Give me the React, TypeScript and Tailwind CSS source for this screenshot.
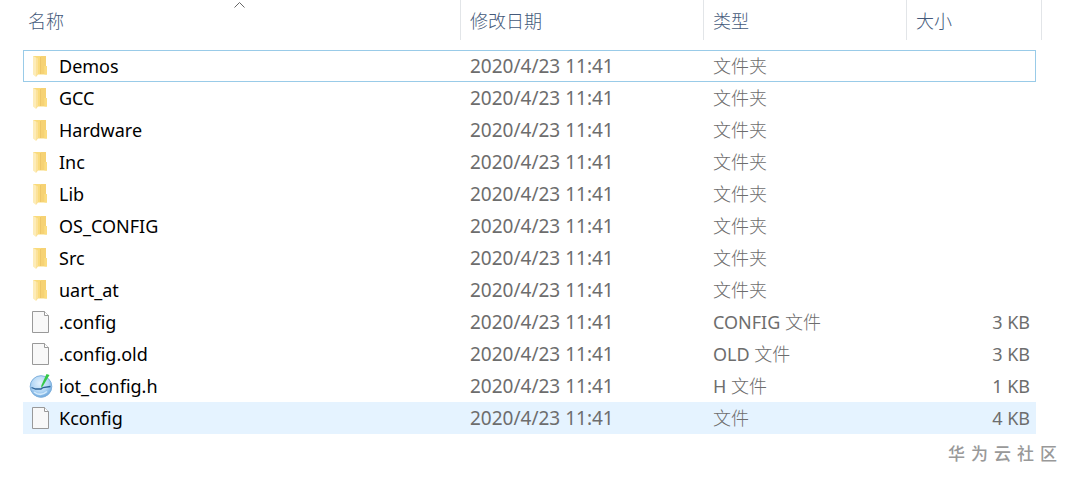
import { useState } from "react";

type FileItem = {
  name: string;
  icon: "folder" | "file" | "header";
  extension?: string;
  type: string;
  size?: string;
};

const MODIFIED = "2020/4/23 11:41";

const files: FileItem[] = [
  { name: "Demos", icon: "folder", type: "文件夹" },
  { name: "GCC", icon: "folder", type: "文件夹" },
  { name: "Hardware", icon: "folder", type: "文件夹" },
  { name: "Inc", icon: "folder", type: "文件夹" },
  { name: "Lib", icon: "folder", type: "文件夹" },
  { name: "OS_CONFIG", icon: "folder", type: "文件夹" },
  { name: "Src", icon: "folder", type: "文件夹" },
  { name: "uart_at", icon: "folder", type: "文件夹" },
  { name: ".config", icon: "file", extension: "CONFIG", type: "文件", size: "3 KB" },
  { name: ".config.old", icon: "file", extension: "OLD", type: "文件", size: "3 KB" },
  { name: "iot_config.h", icon: "header", extension: "H", type: "文件", size: "1 KB" },
  { name: "Kconfig", icon: "file", type: "文件", size: "4 KB" },
];

const columns = ["名称", "修改日期", "类型", "大小"];

function FolderIcon() {
  return (
    <svg width="24" height="24" viewBox="0 0 24 24" aria-hidden="true">
      <path d="M4 2h13v10l1 1v7.500H6z" fill="#fadb7c" />
      <path d="M12 2h5v10h-1.500v8H12z" fill="#f6d274" />
      <path d="M15.500 12h2.500v8.500h-2.500z" fill="#fbdc80" />
      <path d="M4 2l3 1.500V23l-3-2.500z" fill="#fdecb8" />
      <path d="M7 3.500l2 1V20.500L7 23z" fill="#fce29a" />
      <path d="M11.500 3v17" stroke="#eec76a" strokeWidth="1" />
    </svg>
  );
}

function BlankFileIcon() {
  return (
    <svg width="24" height="24" viewBox="0 0 24 24" aria-hidden="true">
      <path
        d="M3.500 1.500h12l4 4v17h-16z"
        fill="#f8f8f8"
        stroke="#999999"
        strokeWidth="1"
      />
      <path
        d="M15.500 1.500v4h4"
        fill="#ffffff"
        stroke="#999999"
        strokeWidth="1"
      />
    </svg>
  );
}

function HeaderFileIcon() {
  return (
    <svg width="24" height="24" viewBox="0 0 24 24" aria-hidden="true">
      <defs>
        <radialGradient id="globe" cx="0.45" cy="0.35" r="0.65">
          <stop offset="0" stopColor="#e2f1fd" />
          <stop offset="0.6" stopColor="#b2d6f5" />
          <stop offset="1" stopColor="#6fa9de" />
        </radialGradient>
      </defs>
      <circle cx="12" cy="12.500" r="10.800" fill="url(#globe)" stroke="#7fb0dc" />
      <path
        d="M2.500 13.500l4 1.500h5.500l2-1.500 7.500-1"
        fill="none"
        stroke="#2d6396"
        strokeWidth="1.300"
      />
      <path d="M5 18c4 3 9 3 13-.5" fill="none" stroke="#d3eafb" strokeWidth="1.500" />
      <path d="M17.500 0l3 1-6.500 11-2 2 .5-3z" fill="#35c748" />
    </svg>
  );
}

function FileIcon({ icon }: { icon: FileItem["icon"] }) {
  if (icon === "folder") return <FolderIcon />;
  if (icon === "header") return <HeaderFileIcon />;
  return <BlankFileIcon />;
}

export default function App() {
  const [focused, setFocused] = useState("Demos");
  const hovered = "Kconfig";

  const cellClass = (name: string) => {
    if (name === focused) return "h-8 p-0 border-y border-[#99cbe8]";
    if (name === hovered) return "h-8 p-0 bg-[#e5f3ff]";
    return "h-8 p-0";
  };

  return (
    <main className="min-h-screen bg-white pl-[23px] pr-[27px] font-['Noto_Sans','Noto_Sans_CJK_SC',sans-serif] text-[18px] leading-6 text-[#6d6d6d]">
      <table className="w-full table-fixed border-separate border-spacing-0 text-left">
        <colgroup>
          <col />
          <col className="w-[243px]" />
          <col className="w-[203px]" />
          <col className="w-[129px]" />
          <col className="w-1.5" />
        </colgroup>
        <thead>
          <tr>
            {columns.map((column, index) => (
              <th
                key={column}
                className={
                  index < 3
                    ? "relative h-10 border-r border-[#e2e5e8] p-0 font-light text-[#44597a]"
                    : "h-10 p-0 font-light text-[#44597a]"
                }
              >
                <button
                  type="button"
                  className={
                    index === 0
                      ? "block w-full pl-[5px] pt-0.5 text-left"
                      : "block w-full pl-[9px] pt-0.5 text-left"
                  }
                >
                  {column}
                </button>
                {index === 0 && (
                  <svg
                    className="absolute left-1/2 top-0.5 -translate-x-2"
                    width="11"
                    height="6"
                    viewBox="0 0 11 6"
                    aria-hidden="true"
                  >
                    <path d="M0.500 5.500l5-5 5 5" fill="none" stroke="#666666" />
                  </svg>
                )}
              </th>
            ))}
            <td className="border-r border-[#e2e5e8] p-0" />
          </tr>
          <tr>
            <td colSpan={5} className="h-2.5 p-0" />
          </tr>
        </thead>
        <tbody>
          {files.map((file) => (
            <tr key={file.name} onClick={() => setFocused(file.name)}>
              <td
                className={
                  cellClass(file.name) + (file.name === focused ? " border-l" : "")
                }
              >
                <div
                  className={
                    file.name === focused
                      ? "flex items-center gap-1.5 pl-[5px] text-black"
                      : "flex items-center gap-1.5 pl-1.5 text-black"
                  }
                >
                  <FileIcon icon={file.icon} />
                  {file.name}
                </div>
              </td>
              <td className={cellClass(file.name)}>
                <div className="pl-[9px] text-[19px]">{MODIFIED}</div>
              </td>
              <td className={cellClass(file.name)}>
                <div className="pl-[9px]">
                  {file.extension && <span>{file.extension} </span>}
                  <span className="font-light">{file.type}</span>
                </div>
              </td>
              <td
                className={
                  cellClass(file.name) + (file.name === focused ? " border-r" : "")
                }
              >
                <div className={file.name === focused ? "pr-[5px] text-right" : "pr-1.5 text-right"}>
                  {file.size}
                </div>
              </td>
              <td className="p-0" />
            </tr>
          ))}
        </tbody>
      </table>
      <div className="-mr-[15px] mt-2 flex justify-end gap-1.5 text-[17px] font-medium text-[#999999]">
        {["华", "为", "云", "社", "区"].map((char) => (
          <span key={char}>{char}</span>
        ))}
      </div>
    </main>
  );
}
